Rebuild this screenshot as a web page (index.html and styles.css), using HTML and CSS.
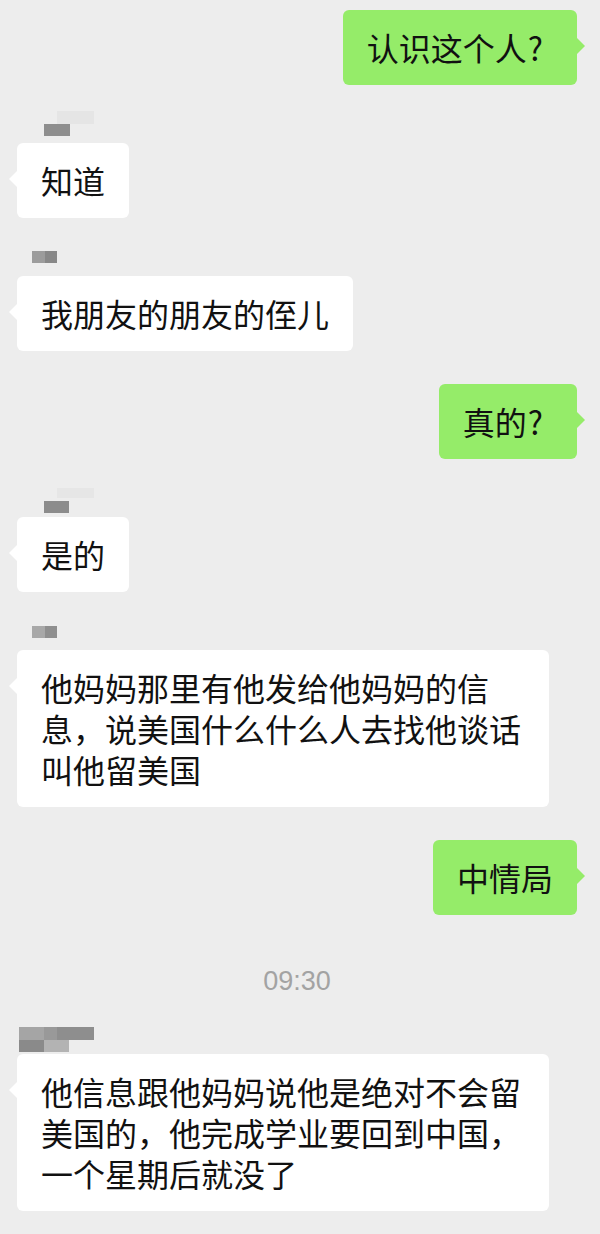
FILE: index.html
```html
<!DOCTYPE html>
<html lang="zh-CN">
<head>
<meta charset="utf-8">
<title>聊天记录</title>
<link rel="stylesheet" href="styles.css">
</head>
<body>
<div class="chat">
  <div class="msg msg-right">
    <div class="bubble bubble-green">认识这个人<span class="q">?</span></div>
  </div>

  <div class="msg msg-left">
    <div class="name">
      <svg width="100" height="25" viewBox="0 0 100 25">
        <rect x="40" y="-7" width="37" height="13" fill="#e5e5e5"/>
        <rect x="27" y="6" width="26" height="12" fill="#8e8e8e"/>
      </svg>
    </div>
    <div class="bubble bubble-white">知道</div>
  </div>

  <div class="msg msg-left">
    <div class="name">
      <svg width="100" height="25" viewBox="0 0 100 25">
        <rect x="15" y="0" width="13" height="12" fill="#9c9c9c"/>
        <rect x="28" y="0" width="12" height="12" fill="#888888"/>
      </svg>
    </div>
    <div class="bubble bubble-white">我朋友的朋友的侄儿</div>
  </div>

  <div class="msg msg-right">
    <div class="bubble bubble-green">真的<span class="q">?</span></div>
  </div>

  <div class="msg msg-left">
    <div class="name">
      <svg width="100" height="25" viewBox="0 0 100 25">
        <rect x="40" y="-4" width="37" height="10" fill="#e6e6e6"/>
        <rect x="27" y="9" width="25" height="12" fill="#8c8c8c"/>
      </svg>
    </div>
    <div class="bubble bubble-white">是的</div>
  </div>

  <div class="msg msg-left">
    <div class="name">
      <svg width="100" height="25" viewBox="0 0 100 25">
        <rect x="15" y="1" width="13" height="12" fill="#a8a8a8"/>
        <rect x="28" y="1" width="12" height="12" fill="#8f8f8f"/>
      </svg>
    </div>
    <div class="bubble bubble-white">他妈妈那里有他发给他妈妈的信息，说美国什么什么人去找他谈话叫他留美国</div>
  </div>

  <div class="msg msg-right">
    <div class="bubble bubble-green">中情局</div>
  </div>

  <div class="time">09:30</div>

  <div class="msg msg-left msg-after-time">
    <div class="name">
      <svg width="100" height="25" viewBox="0 0 100 25">
        <rect x="2" y="-2" width="25" height="13" fill="#a5a5a5"/>
        <rect x="27" y="-2" width="13" height="13" fill="#999999"/>
        <rect x="40" y="-2" width="37" height="13" fill="#8e8e8e"/>
        <rect x="2" y="11" width="25" height="12" fill="#8a8a8a"/>
        <rect x="27" y="11" width="25" height="12" fill="#b3b3b3"/>
      </svg>
    </div>
    <div class="bubble bubble-white">他信息跟他妈妈说他是绝对不会留美国的，他完成学业要回到中国，一个星期后就没了</div>
  </div>
</div>
</body>
</html>
```

FILE: styles.css
```css
html, body {
  margin: 0;
  padding: 0;
  background: #ededed;
}

body {
  width: 600px;
  min-height: 1234px;
  font-family: "Noto Sans CJK SC", "Noto Sans", sans-serif;
  color: #111111;
}

.chat {
  display: flex;
  flex-direction: column;
  padding: 10px 23px 0 17px;
}

.msg {
  display: flex;
  flex-direction: column;
  margin-top: 33px;
}

.msg:first-child {
  margin-top: 0;
}

.msg-right {
  align-items: flex-end;
}

.msg-left {
  align-items: flex-start;
}

.msg-after-time {
  margin-top: 33px;
}

.name {
  height: 25px;
  width: 100px;
}

.name svg {
  display: block;
  overflow: visible;
}

.bubble {
  position: relative;
  box-sizing: border-box;
  max-width: 532px;
  padding: 17px 24px;
  font-size: 32px;
  line-height: 41px;
  border-radius: 6px;
}

.bubble-green {
  background: #95ec69;
}

.bubble-white {
  background: #ffffff;
}

.bubble::before {
  content: "";
  position: absolute;
  top: 28px;
  width: 0;
  height: 0;
  border-top: 8px solid transparent;
  border-bottom: 8px solid transparent;
}

.bubble-green::before {
  right: -8px;
  border-left: 8px solid #95ec69;
}

.bubble-white::before {
  left: -8px;
  border-right: 8px solid #ffffff;
}

.q {
  margin-left: 1px;
  margin-right: 10px;
}

.time {
  margin-top: 51px;
  height: 30px;
  text-align: center;
  font-family: "Liberation Sans", Arial, sans-serif;
  font-size: 27px;
  line-height: 30px;
  color: #a3a3a3;
}
```
